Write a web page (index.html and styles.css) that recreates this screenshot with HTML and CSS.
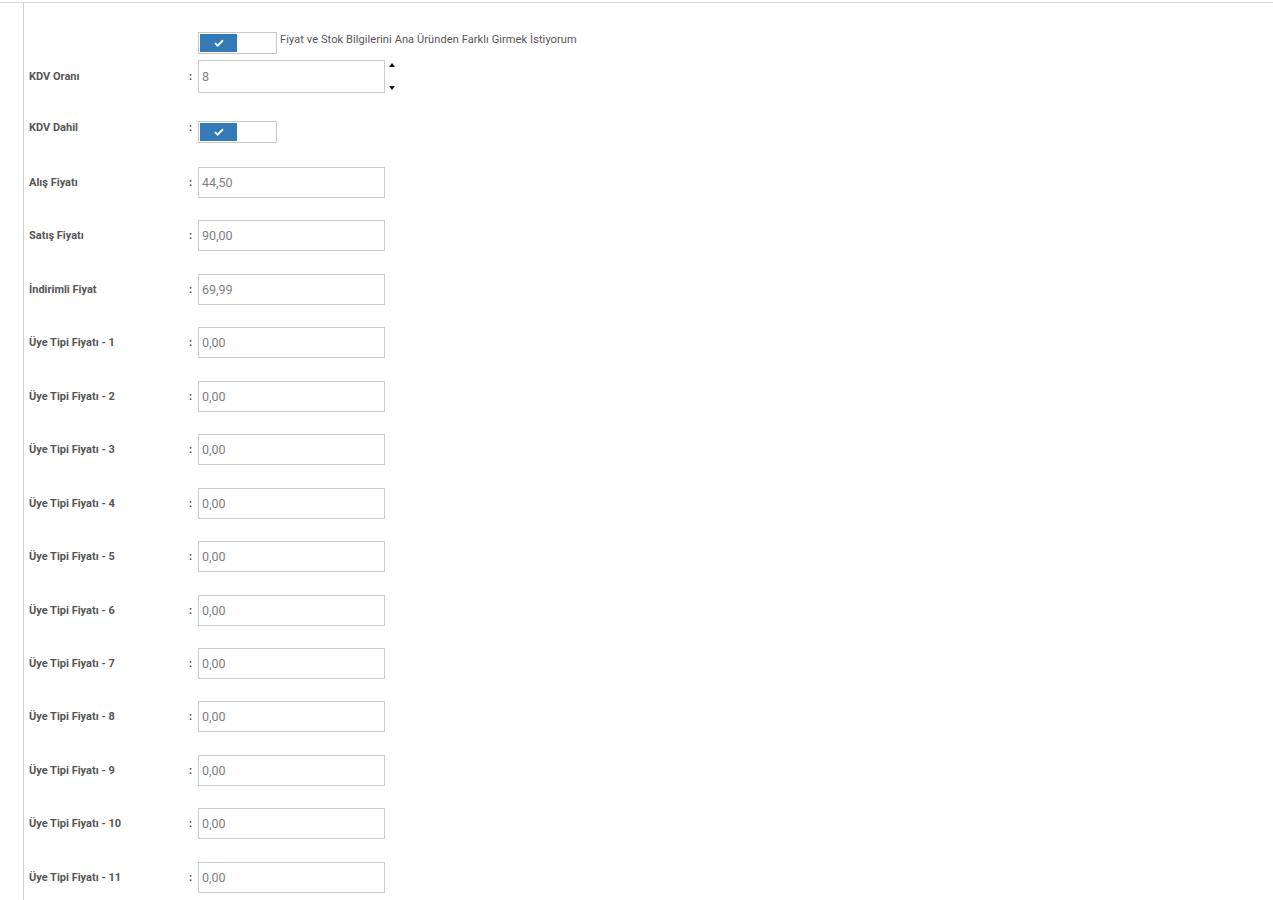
FILE: index.html
```html
<!DOCTYPE html>
<html lang="tr">
<head>
<meta charset="utf-8">
<link rel="stylesheet" href="styles.css">
</head>
<body>
<div class="page">
  <div class="panel">
    <form class="form">
      <div class="row row-top">
        <span class="label"></span>
        <span class="colon colon-empty"></span>
        <span class="toggle"><span class="knob"><svg viewBox="0 0 12 10" width="10" height="8"><path d="M1 5.2 L4.3 8.3 L11 1.6" fill="none" stroke="#fff" stroke-width="2.4"/></svg></span></span>
        <span class="toggle-text">Fiyat ve Stok Bilgilerini Ana Üründen Farklı Girmek İstiyorum</span>
      </div>
      <div class="row row-kdv">
        <span class="label">KDV Oranı</span>
        <span class="colon">:</span>
        <span class="input input-tall">8</span>
        <span class="spinner"><span class="arrow-up"></span><span class="arrow-down"></span></span>
      </div>
      <div class="row row-dahil">
        <span class="label">KDV Dahil</span>
        <span class="colon">:</span>
        <span class="toggle"><span class="knob"><svg viewBox="0 0 12 10" width="10" height="8"><path d="M1 5.2 L4.3 8.3 L11 1.6" fill="none" stroke="#fff" stroke-width="2.4"/></svg></span></span>
      </div>
      <div class="price-list">
        <div class="row"><span class="label">Alış Fiyatı</span><span class="colon">:</span><span class="input">44,50</span></div>
        <div class="row"><span class="label">Satış Fiyatı</span><span class="colon">:</span><span class="input">90,00</span></div>
        <div class="row"><span class="label">İndirimli Fiyat</span><span class="colon">:</span><span class="input">69,99</span></div>
        <div class="row"><span class="label">Üye Tipi Fiyatı - 1</span><span class="colon">:</span><span class="input">0,00</span></div>
        <div class="row"><span class="label">Üye Tipi Fiyatı - 2</span><span class="colon">:</span><span class="input">0,00</span></div>
        <div class="row"><span class="label">Üye Tipi Fiyatı - 3</span><span class="colon">:</span><span class="input">0,00</span></div>
        <div class="row"><span class="label">Üye Tipi Fiyatı - 4</span><span class="colon">:</span><span class="input">0,00</span></div>
        <div class="row"><span class="label">Üye Tipi Fiyatı - 5</span><span class="colon">:</span><span class="input">0,00</span></div>
        <div class="row"><span class="label">Üye Tipi Fiyatı - 6</span><span class="colon">:</span><span class="input">0,00</span></div>
        <div class="row"><span class="label">Üye Tipi Fiyatı - 7</span><span class="colon">:</span><span class="input">0,00</span></div>
        <div class="row"><span class="label">Üye Tipi Fiyatı - 8</span><span class="colon">:</span><span class="input">0,00</span></div>
        <div class="row"><span class="label">Üye Tipi Fiyatı - 9</span><span class="colon">:</span><span class="input">0,00</span></div>
        <div class="row"><span class="label">Üye Tipi Fiyatı - 10</span><span class="colon">:</span><span class="input">0,00</span></div>
        <div class="row"><span class="label">Üye Tipi Fiyatı - 11</span><span class="colon">:</span><span class="input">0,00</span></div>
      </div>
    </form>
  </div>
</div>
</body>
</html>
```
FILE: styles.css
```css
html, body {
  margin: 0;
  padding: 0;
  background: #fff;
  height: 100%;
  overflow: hidden;
}
body {
  font-family: Roboto, "Liberation Sans", Arial, sans-serif;
  color: #555;
}
.page {
  margin-top: 2px;
  border-top: 1px solid #dcdcdc;
  height: 900px;
}
.panel {
  margin-left: 23px;
  border-left: 1px solid #cfcfcf;
  height: 100%;
}
.form {
  padding-left: 5px;
  padding-top: 29px;
  display: flex;
  flex-direction: column;
}
.row {
  display: flex;
  align-items: center;
}
.label {
  width: 160px;
  font-size: 11px;
  font-weight: 700;
  color: #555;
}
.colon {
  width: 9px;
  font-size: 11px;
  font-weight: 700;
  color: #555;
}
.input {
  box-sizing: border-box;
  width: 187px;
  height: 31px;
  border: 1px solid #cccccc;
  font-size: 12.5px;
  color: #808080;
  padding-left: 3px;
  display: flex;
  align-items: center;
}
.input-tall {
  height: 33px;
}
.row-top {
  align-items: flex-start;
}
.row-kdv {
  margin-top: 6px;
}
.row-dahil {
  margin-top: 28px;
  align-items: flex-start;
}
.row-dahil .label,
.row-dahil .colon {
  line-height: 13px;
  margin-top: 0;
}
.price-list {
  margin-top: 24px;
  display: grid;
  grid-auto-rows: 31px;
  row-gap: 22.45px;
}
.toggle {
  box-sizing: border-box;
  width: 79px;
  height: 22px;
  border: 1px solid #c8c8c8;
  padding: 1px;
  display: flex;
}
.knob {
  width: 37px;
  height: 18px;
  background: #337ab7;
  display: flex;
  align-items: center;
  justify-content: center;
}
.toggle-text {
  font-size: 11px;
  letter-spacing: 0.1px;
  color: #555;
  margin-left: 3px;
  margin-top: 1px;
}
.spinner {
  height: 33px;
  margin-left: 4px;
  display: flex;
  flex-direction: column;
  justify-content: space-between;
  padding: 3px 0 3px;
  box-sizing: border-box;
}
.arrow-up {
  width: 0;
  height: 0;
  border-left: 3.5px solid transparent;
  border-right: 3.5px solid transparent;
  border-bottom: 4px solid #111;
}
.arrow-down {
  width: 0;
  height: 0;
  border-left: 3.5px solid transparent;
  border-right: 3.5px solid transparent;
  border-top: 4px solid #111;
}
```
